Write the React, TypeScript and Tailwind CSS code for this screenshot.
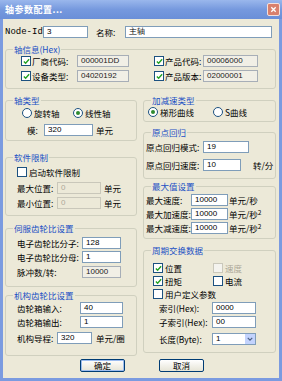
import React from 'react';

type BoxKind = 'edit' | 'ro' | 'dis';

function Box({ w, value, kind = 'edit' }: { w: string; value: string; kind?: BoxKind }) {
  const look =
    kind === 'edit'
      ? 'bg-white border-[#7f9db9] text-black'
      : kind === 'ro'
      ? 'bg-[#f1efe6] border-[#a7aeb7] text-[#222]'
      : 'bg-[#ece9d8] border-[#c9c7ba] text-[#aca899]';
  return (
    <div
      className={`h-[12px] shrink-0 flex items-center px-[3px] border text-[8px] leading-none font-['Liberation_Sans',sans-serif] ${look} ${w}`}
    >
      {value}
    </div>
  );
}

function Check({ on = false, dis = false }: { on?: boolean; dis?: boolean }) {
  return (
    <span
      className={`w-[10px] h-[10px] shrink-0 border flex items-center justify-center ${
        dis ? 'border-[#cac8bb] bg-[#f4f3ee]' : 'border-[#1c5180] bg-white'
      }`}
    >
      {on && (
        <svg viewBox="0 0 8 8" className="w-[7px] h-[7px]">
          <path d="M1 4 L3 6 L7 1.5" stroke="#21a121" strokeWidth="1.6" fill="none" />
        </svg>
      )}
    </span>
  );
}

function Radio({ on = false }: { on?: boolean }) {
  return (
    <span className="w-[10px] h-[10px] shrink-0 rounded-full border border-[#1c5180] bg-white flex items-center justify-center">
      {on && <span className="w-[4px] h-[4px] rounded-full bg-[#2f8a2f]" />}
    </span>
  );
}

function Group({ title, className, children }: { title: string; className: string; children: React.ReactNode }) {
  return (
    <fieldset className={`border border-[#d0d0bf] rounded-[3px] ${className}`}>
      <legend className="ml-[7px] px-[1px] text-[#1a4fc4] leading-[12px] whitespace-nowrap">{title}</legend>
      {children}
    </fieldset>
  );
}

function Label({ w, children }: { w?: string; children: React.ReactNode }) {
  return <span className={`shrink-0 whitespace-nowrap ${w ?? ''}`}>{children}</span>;
}

function Btn({ label, def = false }: { label: string; def?: boolean }) {
  return (
    <div
      className={`w-[45px] h-[13px] rounded-[2px] border border-[#003c74] bg-linear-to-b from-white to-[#e6e4d6] flex items-center justify-center leading-none ${
        def ? 'shadow-[inset_0_0_0_1px_#9dbdf0]' : ''
      }`}
    >
      {label}
    </div>
  );
}

export default function App() {
  return (
    <div className="w-[282px] h-[381px] flex flex-col font-['Noto_Sans_CJK_SC',sans-serif] text-[8.5px] leading-none text-black">
      {/* title bar */}
      <div className="h-[19px] shrink-0 bg-linear-to-b from-[#9ab7ec] via-[#7699de] to-[#6a8fd8] flex items-center pl-[5px] pr-[2px]">
        <span className="text-white text-[9px] font-bold tracking-[0.5px]">轴参数配置...</span>
        <div className="ml-auto w-[13px] h-[13px] rounded-[2px] border border-[#f3e0dc] bg-[#d9806c] flex items-center justify-center">
          <svg viewBox="0 0 8 8" className="w-[7px] h-[7px]">
            <path d="M1.5 1.5 L6.5 6.5 M6.5 1.5 L1.5 6.5" stroke="white" strokeWidth="1.5" />
          </svg>
        </div>
      </div>

      {/* body */}
      <div className="flex-1 bg-[#ece9d8] border-x-[3px] border-b-[3px] border-[#7b9be0] pl-[2px] pr-[3px] pt-[7px] flex flex-col">
        <div className="flex items-center h-[12px]">
          <Label w="w-[38px] font-['Liberation_Mono',monospace] text-[9px]">Node-Id</Label>
          <Box w="w-[45px]" value="3" />
          <Label w="ml-[8px] w-[29px]">名称:</Label>
          <Box w="w-[147px]" value="主轴" />
        </div>

        <Group title="轴信息(Hex)" className="mt-[5px] h-[46px]">
          <div className="flex items-center h-[12px] pl-[15px]">
            <Check on />
            <Label w="ml-[1px] w-[45px]">厂商代码:</Label>
            <Box w="w-[52px]" value="000001DD" kind="ro" />
            <span className="ml-[25px]" />
            <Check on />
            <Label w="ml-[1px] w-[38px]">产品代码:</Label>
            <Box w="w-[55px]" value="00006000" kind="ro" />
          </div>
          <div className="flex items-center h-[12px] pl-[15px] mt-[3px]">
            <Check on />
            <Label w="ml-[1px] w-[45px]">设备类型:</Label>
            <Box w="w-[52px]" value="04020192" kind="ro" />
            <span className="ml-[25px]" />
            <Check on />
            <Label w="ml-[1px] w-[38px]">产品版本:</Label>
            <Box w="w-[55px]" value="02000001" kind="ro" />
          </div>
        </Group>

        <div className="mt-[5px] flex gap-[6px]">
          {/* left column */}
          <div className="w-[132px] flex flex-col">
            <Group title="轴类型" className="h-[47px]">
              <div className="flex items-center h-[12px] pl-[16px] mt-[1px]">
                <div className="w-[51px] flex items-center gap-[2px]">
                  <Radio />
                  <Label>旋转轴</Label>
                </div>
                <div className="flex items-center gap-[2px]">
                  <Radio on />
                  <Label>线性轴</Label>
                </div>
              </div>
              <div className="flex items-center h-[12px] pl-[21px] mt-[5px]">
                <Label w="w-[17px]">模:</Label>
                <Box w="w-[49px]" value="320" />
                <Label w="ml-[3px]">单元</Label>
              </div>
            </Group>

            <Group title="软件限制" className="mt-[10px] h-[65px]">
              <div className="flex items-center h-[12px] pl-[11px] mt-[3px] gap-[2px]">
                <Check />
                <Label>启动软件限制</Label>
              </div>
              <div className="flex items-center h-[12px] pl-[11px] mt-[4px]">
                <Label w="w-[40px]">最大位置:</Label>
                <Box w="w-[44px]" value="0" kind="dis" />
                <Label w="ml-[3px]">单元</Label>
              </div>
              <div className="flex items-center h-[12px] pl-[11px] mt-[3px]">
                <Label w="w-[40px]">最小位置:</Label>
                <Box w="w-[44px]" value="0" kind="dis" />
                <Label w="ml-[3px]">单元</Label>
              </div>
            </Group>

            <Group title="伺服齿轮比设置" className="mt-[6px] h-[65px]">
              <div className="flex items-center h-[12px] pl-[11px] mt-[3px]">
                <Label w="w-[65px]">电子齿轮比分子:</Label>
                <Box w="w-[39px]" value="128" />
              </div>
              <div className="flex items-center h-[12px] pl-[11px] mt-[2px]">
                <Label w="w-[65px]">电子齿轮比分母:</Label>
                <Box w="w-[39px]" value="1" />
              </div>
              <div className="flex items-center h-[12px] pl-[11px] mt-[3px]">
                <Label w="w-[65px]">脉冲数/转:</Label>
                <Box w="w-[39px]" value="10000" kind="ro" />
              </div>
            </Group>

            <Group title="机构齿轮比设置" className="mt-[2px] h-[67px]">
              <div className="flex items-center h-[12px] pl-[11px] mt-[1px]">
                <Label w="w-[63px]">齿轮箱输入:</Label>
                <Box w="w-[43px]" value="40" />
              </div>
              <div className="flex items-center h-[12px] pl-[11px] mt-[2px]">
                <Label w="w-[63px]">齿轮箱输出:</Label>
                <Box w="w-[43px]" value="1" />
              </div>
              <div className="flex items-center h-[12px] pl-[11px] mt-[4px]">
                <Label w="w-[40px]">机构导程:</Label>
                <Box w="w-[35px]" value="320" />
                <Label w="ml-[4px]">单元/圈</Label>
              </div>
            </Group>
          </div>

          {/* right column */}
          <div className="w-[133px] flex flex-col">
            <Group title="加减速类型" className="h-[28px]">
              <div className="flex items-center h-[12px] pl-[4px]">
                <div className="w-[65px] flex items-center gap-[2px]">
                  <Radio on />
                  <Label>梯形曲线</Label>
                </div>
                <div className="flex items-center gap-[2px]">
                  <Radio />
                  <Label>S曲线</Label>
                </div>
              </div>
            </Group>

            <Group title="原点回归" className="mt-[4px] h-[53px]">
              <div className="flex items-center h-[12px] pl-[2px] mt-[3px]">
                <Label w="w-[57px]">原点回归模式:</Label>
                <Box w="w-[46px]" value="19" />
              </div>
              <div className="flex items-center h-[12px] pl-[2px] mt-[6px]">
                <Label w="w-[57px]">原点回归速度:</Label>
                <Box w="w-[38px]" value="10" />
                <Label w="ml-[12px]">转/分</Label>
              </div>
            </Group>

            <Group title="最大值设置" className="mt-[1px] h-[59px]">
              <div className="flex items-center h-[12px] pl-[2px] mt-[2px]">
                <Label w="w-[45px]">最大速度:</Label>
                <Box w="w-[37px]" value="10000" />
                <Label w="ml-[1px]">单元/秒</Label>
              </div>
              <div className="flex items-center h-[12px] pl-[2px] mt-[2px]">
                <Label w="w-[45px]">最大加速度:</Label>
                <Box w="w-[37px]" value="10000" />
                <Label w="ml-[1px]">
                  单元/秒<sup className="text-[6.5px]">2</sup>
                </Label>
              </div>
              <div className="flex items-center h-[12px] pl-[2px] mt-[2px]">
                <Label w="w-[45px]">最大减速度:</Label>
                <Box w="w-[37px]" value="10000" />
                <Label w="ml-[1px]">
                  单元/秒<sup className="text-[6.5px]">2</sup>
                </Label>
              </div>
            </Group>

            <Group title="周期交换数据" className="mt-[5px] h-[109px]">
              <div className="flex items-center h-[12px] pl-[9px] mt-[6px]">
                <div className="w-[60px] flex items-center gap-[2px]">
                  <Check on />
                  <Label>位置</Label>
                </div>
                <div className="flex items-center gap-[2px] text-[#aca899]">
                  <Check dis />
                  <Label>速度</Label>
                </div>
              </div>
              <div className="flex items-center h-[12px] pl-[9px] mt-[1px]">
                <div className="w-[60px] flex items-center gap-[2px]">
                  <Check on />
                  <Label>扭矩</Label>
                </div>
                <div className="flex items-center gap-[2px]">
                  <Check />
                  <Label>电流</Label>
                </div>
              </div>
              <div className="flex items-center h-[12px] pl-[9px] mt-[1px] gap-[2px]">
                <Check />
                <Label>用户定义参数</Label>
              </div>
              <div className="flex items-center h-[12px] pl-[15px] mt-[2px]">
                <Label w="w-[53px]">索引(Hex):</Label>
                <Box w="w-[44px]" value="0000" />
              </div>
              <div className="flex items-center h-[12px] pl-[15px] mt-[2px]">
                <Label w="w-[53px]">子索引(Hex):</Label>
                <Box w="w-[44px]" value="00" />
              </div>
              <div className="flex items-center h-[12px] pl-[15px] mt-[5px]">
                <Label w="w-[53px]">长度(Byte):</Label>
                <div className="w-[44px] h-[12px] shrink-0 border border-[#7f9db9] bg-white flex items-center">
                  <span className="flex-1 pl-[3px] text-[8px] font-['Liberation_Sans',sans-serif]">1</span>
                  <span className="w-[10px] h-full bg-[#c3d3fd] flex items-center justify-center">
                    <svg viewBox="0 0 8 8" className="w-[6px] h-[6px]">
                      <path d="M1 2.5 L4 5.5 L7 2.5" stroke="#4d6185" strokeWidth="1.6" fill="none" />
                    </svg>
                  </span>
                </div>
              </div>
            </Group>
          </div>
        </div>

        <div className="mt-[3px] flex">
          <span className="ml-[75px]">
            <Btn label="确定" def />
          </span>
          <span className="ml-[34px]">
            <Btn label="取消" />
          </span>
        </div>
      </div>
    </div>
  );
}
